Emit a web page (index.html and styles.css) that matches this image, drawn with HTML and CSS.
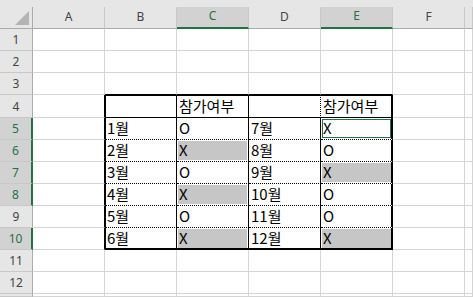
FILE: index.html
```html
<!DOCTYPE html>
<html lang="ko">
<head>
    <meta charset="UTF-8">
    <meta name="viewport" content="width=device-width, initial-scale=1.0">
    <title>참가여부</title>
    <link rel="stylesheet" href="styles.css">
</head>
<body>
    <div class="excel">
        <div class="strip"></div>
        <div class="sheet" id="sheet"></div>
    </div>
    <script>
        document.addEventListener('DOMContentLoaded', function () {
            const sheet = document.getElementById('sheet');
            const cols = ['A', 'B', 'C', 'D', 'E', 'F', 'G'];
            const selCols = ['C', 'E'];
            const selRows = [5, 6, 7, 8, 10];
            const values = {
                C4: '참가여부', E4: '참가여부',
                B5: '1월', C5: 'O', D5: '7월', E5: 'X',
                B6: '2월', C6: 'X', D6: '8월', E6: 'O',
                B7: '3월', C7: 'O', D7: '9월', E7: 'X',
                B8: '4월', C8: 'X', D8: '10월', E8: 'O',
                B9: '5월', C9: 'O', D9: '11월', E9: 'O',
                B10: '6월', C10: 'X', D10: '12월', E10: 'X'
            };
            const filled = ['C6', 'C8', 'C10', 'E7', 'E10'];
            const active = 'E5';

            function add(cls, html) {
                const div = document.createElement('div');
                div.className = cls;
                div.innerHTML = html || '';
                sheet.appendChild(div);
                return div;
            }

            // corner + column headers
            add('cell head corner', '<svg width="32" height="21"><polygon points="15,18 29,18 29,4" fill="#b4b4b4"/></svg>');
            cols.forEach(function (c) {
                const on = selCols.includes(c) ? ' on' : '';
                add('cell head col-head' + on, c === 'G' ? '' : c);
            });

            function borders(c, r) {
                const inTable = 'BCDE'.indexOf(c) !== -1 && r >= 4 && r <= 10;
                const cls = [];
                if (r === 3 && 'BCDE'.indexOf(c) !== -1) cls.push('above');
                if (c === 'A' && r >= 4 && r <= 10) cls.push('before');
                if (!inTable) return cls;
                cls.push('t');
                if (r === 4) cls.push('top');
                if (r === 10) cls.push('bottom');
                if (r > 4 && r < 10) cls.push('dot-b');
                if (c === 'B') cls.push('left');
                if (c === 'E') cls.push('right');
                if (c === 'D' && r === 4) cls.push('dot-r');
                return cls;
            }

            for (let r = 1; r <= 13; r++) {
                const on = selRows.includes(r) ? ' on' : '';
                add('cell head row-head' + on, r < 13 ? String(r) : '');
                cols.forEach(function (c) {
                    const key = c + r;
                    const cell = add(['cell'].concat(borders(c, r)).join(' '));
                    let valCls = 'val';
                    if (filled.includes(key)) valCls += ' sel';
                    if (key === active) valCls += ' active';
                    const val = document.createElement('div');
                    val.className = valCls;
                    val.textContent = values[key] || '';
                    cell.appendChild(val);
                });
            }
        });
    </script>
</body>
</html>
```

FILE: styles.css
```css
body {
    margin: 0;
    background-color: #fff;
    overflow: hidden;
    font-family: "Noto Sans CJK KR", "Noto Sans", sans-serif;
}

.strip {
    height: 7px;
    background-color: #e6e6e6;
}

.sheet {
    display: grid;
    grid-template-columns: 33px repeat(6, 72px) 8px;
    grid-template-rows: 22px 22px 22px 22px 23px repeat(8, 22px) 3px;
}

.cell {
    --st: 0 0 transparent;
    --sl: 0 0 transparent;
    --sr: 0 0 transparent;
    --sb: 0 0 transparent;
    box-sizing: border-box;
    display: flex;
    min-width: 0;
    overflow: hidden;
    border-right: 1px solid #d4d4d4;
    border-bottom: 1px solid #d4d4d4;
    box-shadow: var(--st), var(--sl), var(--sr), var(--sb);
}

/* headers */
.head {
    background-color: #e6e6e6;
    border-right-color: #c8c8c8;
    border-bottom-color: #c8c8c8;
    justify-content: center;
    align-items: center;
    font-family: "Noto Sans", sans-serif;
    font-size: 12px;
    color: #444;
}

.col-head {
    border-bottom-color: #ababab;
    padding-bottom: 3px;
}

.row-head {
    border-right-color: #ababab;
}

.corner {
    border-right-color: #ababab;
    border-bottom-color: #ababab;
    align-items: flex-start;
    justify-content: flex-start;
}

.head.on {
    background-color: #d2d2d2;
    color: #217346;
}

.col-head.on {
    border-bottom: 2px solid #217346;
}

.row-head.on {
    border-right: 2px solid #217346;
}

/* table borders */
.above {
    border-bottom-color: #000;
}

.before {
    border-right-color: #000;
}

.t {
    border-right-color: #000;
    border-bottom-color: #000;
}

.dot-b {
    border-bottom-style: dotted;
}

.dot-r {
    border-right-style: dotted;
}

.top {
    --st: inset 0 1px #000;
}

.left {
    --sl: inset 1px 0 #000;
}

.right {
    --sr: inset -1px 0 #000;
}

.bottom {
    --sb: inset 0 -1px #000;
}

/* cell values */
.val {
    box-sizing: border-box;
    flex: 1;
    margin: 1px;
    padding: 0 1px;
    display: flex;
    align-items: flex-end;
    font-size: 15px;
    line-height: 20px;
    color: #000;
    white-space: nowrap;
}

.val.sel {
    background-color: #c6c6c6;
}

.val.active {
    box-shadow: inset 0 0 0 1px #217346;
}
```
